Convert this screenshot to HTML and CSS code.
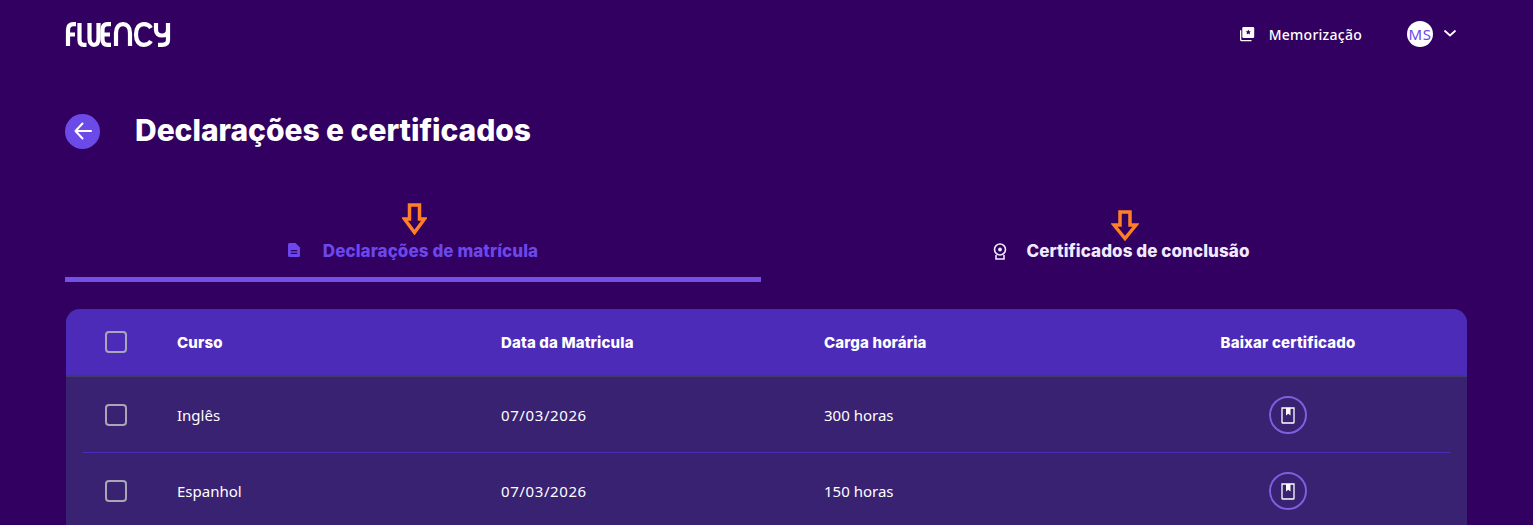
FILE: index.html
```html
<!DOCTYPE html>
<html lang="pt-BR">
<head>
<meta charset="utf-8">
<title>Declarações e certificados</title>
<link rel="stylesheet" href="styles.css">
</head>
<body>
<div class="page">
  <header class="topbar">
    <svg class="logo" viewBox="0 0 106 25" role="img" aria-label="Fluency" fill="none" stroke="#fff" stroke-width="4.200" stroke-linecap="butt">
      <path d="M3 24V8C3 4 5 2.200 8.500 2.200H11M3 12.500h7"/>
      <path d="M14.500 1v17c0 3.200 1.300 4.800 4 4.800h3"/>
      <path d="M24.500 1v15c0 4.500 1.500 6.800 4.500 6.800s4.500-2.300 4.500-6.800V1"/>
      <path d="M46 2.200h-3.500C39 2.200 37.500 4 37.500 8v9c0 4 1.500 5.800 5 5.800H46M37.500 12.500H45"/>
      <path d="M51 24V11c0-6 3-8.800 7-8.800s7 2.800 7 8.800v13"/>
      <path d="M86 6c-1.500-2.500-4-3.800-7-3.800-5 0-8 3.800-8 10.300s3 10.300 8 10.300c3 0 5.500-1.300 7-3.800"/>
      <path d="M91 1v7c0 3.500 2.500 5.500 6 5.500s6-2 6-5.500V1M103 8v10c0 3.300-2.500 4.800-6 4.800h-4"/>
    </svg>
    <nav class="topnav">
      <a class="memo">
        <svg class="memo-icon" viewBox="0 0 16 16" aria-hidden="true">
          <path fill="#fff" d="M4.500 1H14a1.200 1.200 0 0 1 1.200 1.200v8.600A1.200 1.200 0 0 1 14 12H4.500a1.200 1.200 0 0 1-1.200-1.200V2.200A1.200 1.200 0 0 1 4.500 1z"/>
          <path fill="#fff" d="M1 4.200h1.300v9.200c0 .3.200.5.500.5h9.700v1.300H2.400A1.400 1.400 0 0 1 1 13.800z"/>
          <path fill="#310060" d="M9.300 3.500l.8 1.700 1.800.2-1.300 1.200.4 1.800-1.700-.9-1.600.9.300-1.800-1.300-1.200 1.800-.2z"/>
        </svg>
        <span>Memorização</span>
      </a>
      <span class="avatar">MS</span>
      <svg class="chev" viewBox="0 0 14 9" aria-hidden="true" fill="none" stroke="#fff" stroke-width="1.800" stroke-linecap="round" stroke-linejoin="round"><path d="M2 2l5 4.500L12 2"/></svg>
    </nav>
  </header>

  <div class="title-row">
    <a class="back">
      <svg viewBox="0 0 20 20" aria-hidden="true" fill="none" stroke="#fff" stroke-width="2" stroke-linecap="round" stroke-linejoin="round"><path d="M18 10H2.500M9.500 2.500L2.500 10l7 7.500"/></svg>
    </a>
    <h1>Declarações e certificados</h1>
  </div>

  <div class="tabs">
    <div class="tab active">
      <svg class="tab-icon" viewBox="0 0 12 14" aria-hidden="true"><path fill="#6b47ec" d="M1.500 0H7.500L12 4.500V12.500A1.500 1.500 0 0 1 10.500 14H1.500A1.500 1.500 0 0 1 0 12.500V1.500A1.500 1.500 0 0 1 1.500 0z"/><path fill="#310060" d="M2.800 7h6.400v1.200H2.800zM2.800 9.700h6.400v1.200H2.800z"/></svg>
      <span>Declarações de matrícula</span>
      <svg class="mark mark-a" viewBox="0 0 25 32" aria-hidden="true"><path fill="none" stroke="#ff7f27" stroke-width="3.500" d="M7.500 2h10v14h5L12.500 29.500 2.500 16h5z"/></svg>
    </div>
    <div class="tab second">
      <svg class="tab-icon" viewBox="0 0 14 17" aria-hidden="true" fill="none" stroke="#f0eaff" stroke-width="1.600"><circle cx="7" cy="6.500" r="5.500"/><circle cx="7" cy="6.500" r="1.900" fill="#f0eaff" stroke="none"/><path d="M3 12v4h8v-4"/></svg>
      <span>Certificados de conclusão</span>
      <svg class="mark mark-b" viewBox="0 0 28 31" aria-hidden="true"><path fill="none" stroke="#ff7f27" stroke-width="3.500" d="M9 2h10v13h6L14 28.500 3 15h6z"/></svg>
    </div>
  </div>

  <section class="table">
    <div class="row head">
      <span class="box"></span>
      <span class="cell">Curso</span>
      <span class="cell">Data da Matricula</span>
      <span class="cell">Carga horária</span>
      <span class="cell center">Baixar certificado</span>
    </div>
    <div class="row body">
      <span class="box"></span>
      <span class="cell">Inglês</span>
      <span class="cell date">07/03/2026</span>
      <span class="cell">300 horas</span>
      <span class="cell center"><a class="dl"><svg viewBox="0 0 14 17" aria-hidden="true"><path fill="none" stroke="#fff" stroke-width="1.300" d="M1 1h12v14.500a.5.500 0 0 1-.5.500h-11a.5.500 0 0 1-.5-.500z"/><path fill="#fff" d="M5 1h4.500v7.500L7.250 6.800 5 8.500z"/></svg></a></span>
    </div>
    <div class="row body">
      <span class="box"></span>
      <span class="cell">Espanhol</span>
      <span class="cell date">07/03/2026</span>
      <span class="cell">150 horas</span>
      <span class="cell center"><a class="dl"><svg viewBox="0 0 14 17" aria-hidden="true"><path fill="none" stroke="#fff" stroke-width="1.300" d="M1 1h12v14.500a.5.500 0 0 1-.5.500h-11a.5.500 0 0 1-.5-.500z"/><path fill="#fff" d="M5 1h4.500v7.500L7.250 6.800 5 8.500z"/></svg></a></span>
    </div>
  </section>
</div>
</body>
</html>
```

FILE: styles.css
```css
* { box-sizing: border-box; }
html, body { margin: 0; height: 100%; overflow: hidden; }
body {
  background: #310060;
  color: #fff;
  font-family: "Noto Sans", "Open Sans", sans-serif;
}
.page { padding: 0 66px 0 65px; }

.topbar {
  height: 68px;
  display: flex;
  align-items: center;
  justify-content: space-between;
}
.logo { width: 106px; height: 25px; }
.topnav { display: flex; align-items: center; padding-right: 10px; }
.memo { display: flex; align-items: center; font-size: 14px; font-weight: 500; letter-spacing: .25px; }
.memo-icon { width: 16px; height: 16px; margin-right: 14px; }
.avatar {
  width: 26px; height: 26px; margin-left: 45px;
  border-radius: 50%;
  background: #fff;
  color: #6b47ec;
  font-size: 15px;
  letter-spacing: .5px;
  display: flex; align-items: center; justify-content: center;
}
.chev { width: 14px; height: 9px; margin-left: 10px; margin-top: -1px; }

.title-row {
  display: flex;
  align-items: center;
  height: 36px;
  margin-top: 45px;
}
.back {
  width: 35px; height: 35px;
  border-radius: 50%;
  background: #6c4ae8;
  display: flex; align-items: center; justify-content: center;
  margin-right: 35px;
}
.back svg { width: 20px; height: 20px; }
h1 {
  margin: -2px 0 0;
  font-family: Inter, "Noto Sans", sans-serif;
  font-size: 30px;
  font-weight: 800;
  line-height: 36px;
  letter-spacing: -.04px;
}

.tabs {
  display: grid;
  grid-template-columns: 696px 1fr;
  margin-top: 51px;
  font-family: Inter, "Noto Sans", sans-serif;
  font-size: 17px;
  font-weight: 800;
  letter-spacing: .08px;
}
.tab {
  position: relative;
  height: 82px;
  padding-top: 38px;
  display: flex;
  justify-content: center;
  align-items: flex-start;
  line-height: 26px;
  color: #f0eaff;
}
.tab span { margin-left: 23px; }
.tab.second { padding-left: 14px; }
.tab.second span { margin-left: 20px; }
.tab.active { color: #6b47ec; border-bottom: 5px solid #7350e6; }
.tab-icon { width: 12px; height: 14px; margin-top: 5px; }
.second .tab-icon { width: 14px; height: 17px; }
.mark { position: absolute; }
.mark-a { left: 337px; top: 3px; width: 25px; height: 32px; }
.mark-b { left: 350px; top: 10px; width: 28px; height: 31px; }

.table {
  margin: 27px 0 0 1px;
  border-radius: 14px 14px 0 0;
  overflow: hidden;
  background: #3a2272;
}
.row {
  display: grid;
  grid-template-columns: 111px 324px 323px 285px 1fr;
  align-items: center;
  position: relative;
}
.head {
  height: 68px;
  background: #4b2bb8;
  border-bottom: 2px solid #413b6b;
  font-family: Inter, "Noto Sans", sans-serif;
  font-weight: 800;
  font-size: 15px;
  letter-spacing: .15px;
}
.body { height: 76px; font-size: 15px; }
.date { letter-spacing: .6px; }
.body + .body::before {
  content: "";
  position: absolute;
  left: 17px; right: 17px; top: -1px;
  height: 1px;
  background: #4b2bb8;
}
.box {
  width: 22px; height: 22px;
  margin-left: 39px;
  border: 2px solid #aaa6b6;
  border-radius: 4px;
}
.center { display: flex; justify-content: center; }
.dl {
  width: 38px; height: 38px;
  border-radius: 50%;
  border: 2px solid #7d5fe0;
  display: flex; align-items: center; justify-content: center;
}
.dl svg { width: 14px; height: 17px; }
```
